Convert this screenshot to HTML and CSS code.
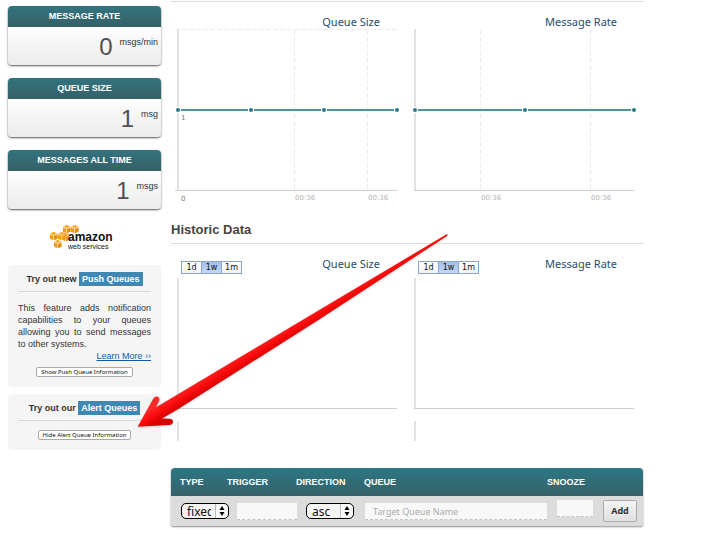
FILE: index.html
```html
<!DOCTYPE html>
<html lang="en">
<head>
<meta charset="utf-8">
<title>Queue dashboard</title>
<link rel="stylesheet" href="styles.css">
</head>
<body>
<div class="page">
  <aside class="sidebar">
    <section class="stat">
      <h2>MESSAGE RATE</h2>
      <p><strong>0</strong><span>msgs/min</span></p>
    </section>
    <section class="stat">
      <h2>QUEUE SIZE</h2>
      <p><strong>1</strong><span>msg</span></p>
    </section>
    <section class="stat">
      <h2>MESSAGES ALL TIME</h2>
      <p><strong>1</strong><span>msgs</span></p>
    </section>

    <svg class="aws" width="64" height="28" viewBox="0 0 64 28" role="img" aria-label="amazon web services">
      <defs>
        <g id="cube">
          <path fill="#f7a428" d="M0 1.500 3.800 0 7.600 1.500 3.800 3z"/>
          <path fill="#f29a1e" d="M0 2.200 3.500 3.600V8.200L0 6.700z"/>
          <path fill="#e88b10" d="M7.600 2.200 4.100 3.600V8.200L7.600 6.700z"/>
          <path fill="none" stroke="#fde3b4" stroke-width=".5" d="M1.600 1V3.600M5.800 1V3.600"/>
        </g>
      </defs>
      <use href="#cube" x="13" y="0"/>
      <use href="#cube" x="21" y="0"/>
      <use href="#cube" x="0" y="7"/>
      <use href="#cube" x="8" y="7"/>
      <use href="#cube" x="4" y="15"/>
      <use href="#cube" x="12" y="8"/>
      <text class="aws-name" x="18" y="16">amazon</text>
      <text class="aws-sub" x="18" y="24">web services</text>
    </svg>

    <section class="promo">
      <h3>Try out new <mark>Push Queues</mark></h3>
      <p>This feature adds notification capabilities to your queues allowing you to send messages to other systems.</p>
      <a href="#push">Learn More ››</a>
      <button type="button">Show Push Queue Information</button>
    </section>
    <section class="promo">
      <h3>Try out our <mark>Alert Queues</mark></h3>
      <button type="button">Hide Alert Queue Information</button>
    </section>
  </aside>

  <main class="main">
    <div class="charts">
      <figure class="chart">
        <figcaption>Queue Size</figcaption>
        <svg viewBox="0 0 236 178">
          <path class="grid" d="M4 1.500H226M123.500 2V165M196.500 2V165"/>
          <path class="axis" d="M7 1V162"/>
          <path class="base" d="M4 162.500H226"/>
          <path class="series" d="M7 82H226"/>
          <g class="dots"><circle cx="7" cy="82" r="3"/><circle cx="80" cy="82" r="3"/><circle cx="153" cy="82" r="3"/><circle cx="226" cy="82" r="3"/></g>
          <text class="value" x="10" y="92">1</text>
          <text class="value" x="10" y="173">0</text>
          <text class="tick" x="124" y="172">00:36</text>
          <text class="tick" x="197" y="172">00:36</text>
        </svg>
      </figure>
      <figure class="chart">
        <figcaption>Message Rate</figcaption>
        <svg viewBox="0 0 236 178">
          <path class="grid" d="M72.500 2V165M182.500 2V165"/>
          <path class="axis" d="M7 1V162"/>
          <path class="base" d="M6 162.500H226"/>
          <path class="series" d="M7 82H226"/>
          <g class="dots"><circle cx="7" cy="82" r="3"/><circle cx="117" cy="82" r="3"/><circle cx="226" cy="82" r="3"/></g>
          <text class="tick" x="73" y="172">00:36</text>
          <text class="tick" x="183" y="172">00:36</text>
        </svg>
      </figure>
    </div>

    <h2 class="heading">Historic Data</h2>
    <div class="charts">
      <figure class="chart">
        <div class="range"><button type="button">1d</button><button type="button" class="on">1w</button><button type="button">1m</button></div>
        <figcaption>Queue Size</figcaption>
        <svg viewBox="0 0 236 171">
          <path class="axis" d="M7 8V139M7 151V171"/>
          <path class="base" d="M6 138.500H226"/>
        </svg>
      </figure>
      <figure class="chart">
        <div class="range"><button type="button">1d</button><button type="button" class="on">1w</button><button type="button">1m</button></div>
        <figcaption>Message Rate</figcaption>
        <svg viewBox="0 0 236 171">
          <path class="axis" d="M7 8V139M7 151V171"/>
          <path class="base" d="M6 138.500H226"/>
        </svg>
      </figure>
    </div>

    <table class="alerts">
      <colgroup><col class="c-type"><col class="c-trigger"><col class="c-direction"><col><col class="c-snooze"><col class="c-add"></colgroup>
      <thead>
        <tr><th>TYPE</th><th>TRIGGER</th><th>DIRECTION</th><th>QUEUE</th><th>SNOOZE</th><th></th></tr>
      </thead>
      <tbody>
        <tr>
          <td><span class="pick"><select aria-label="Type"><option>fixed</option><option>progressive</option></select><svg viewBox="0 0 6 10"><path d="M3 0 5.500 4H.5zM3 10 .5 6H5.500z"/></svg></span></td>
          <td><input type="text" class="trigger" aria-label="Trigger"></td>
          <td><span class="pick"><select aria-label="Direction"><option>asc</option><option>desc</option></select><svg viewBox="0 0 6 10"><path d="M3 0 5.500 4H.5zM3 10 .5 6H5.500z"/></svg></span></td>
          <td class="queue"><input type="text" aria-label="Queue" placeholder="Target Queue Name"></td>
          <td class="raised"><input type="text" class="snooze" aria-label="Snooze"></td>
          <td class="add"><button type="button">Add</button></td>
        </tr>
      </tbody>
    </table>
  </main>

  <svg class="pointer" width="320" height="200" viewBox="132 232 320 200" aria-hidden="true">
    <defs>
      <linearGradient id="red" gradientUnits="userSpaceOnUse" x1="240" y1="353" x2="248" y2="366">
        <stop offset="0" stop-color="#ff2a2a"/><stop offset=".5" stop-color="#fb0d0d"/><stop offset="1" stop-color="#d80000"/>
      </linearGradient>
    </defs>
    <path fill="url(#red)" d="M447 234 320 309.500 156 407.300 159.300 400.500Q160 397 157 396.600 154.500 396 153 399L137.700 426.700 169 425Q173 424.600 173 421.500 172.600 418.800 169.500 418.700L162 418.500 176.700 410 320 319 447 236Q448 235 447 234z"/>
  </svg>
</div>
</body>
</html>
```
FILE: styles.css
```css
* { box-sizing: border-box; }

body {
  margin: 0;
  background: #fff;
  color: #333;
  font-family: "Liberation Sans", Arial, sans-serif;
  font-size: 9px;
  line-height: 12px;
}

h2, h3, p, figure { margin: 0; }

.page {
  position: relative;
  display: grid;
  grid-template-columns: 153px minmax(0, 1fr);
  column-gap: 10px;
  padding: 0 72px 12px 8px;
}

/* Sidebar */
.sidebar {
  display: flex;
  flex-direction: column;
  padding-top: 6px;
}

.stat {
  height: 59px;
  margin-bottom: 13px;
  border-radius: 4px;
  background: linear-gradient(#fff 35%, #ebebeb);
  box-shadow: 0 1px 2px rgba(0, 0, 0, .65);
}

.stat h2 {
  height: 21px;
  border-radius: 4px 4px 0 0;
  background: linear-gradient(#33747f, #365f66);
  color: #fff;
  font-size: 9px;
  line-height: 20px;
  text-align: center;
}

.stat p {
  display: flex;
  justify-content: flex-end;
  gap: 7px;
  padding: 8px 3px 0 0;
}

.stat strong {
  color: #505050;
  font-size: 24px;
  font-weight: 400;
  line-height: 24px;
}

.stat span { line-height: 15px; }

.aws {
  align-self: center;
  margin: 3px 6px 12px 0;
  font-family: "Liberation Sans", Arial, sans-serif;
}

.aws-name { font-size: 12px; font-weight: 700; fill: #111; }
.aws-sub { font-size: 7px; fill: #111; }

.promo {
  display: flex;
  flex-direction: column;
  margin-bottom: 7px;
  padding: 7px 10px 10px;
  border-radius: 4px;
  background: #f5f5f5;
}

.promo h3 {
  padding-bottom: 5px;
  border-bottom: 1px solid #d8d8d8;
  font-size: 9px;
  line-height: 14px;
  text-align: center;
}

.promo mark {
  display: inline-block;
  padding: 0 3px;
  background: #4088b4;
  color: #fff;
}

.promo p {
  margin-top: 10px;
  text-align: justify;
}

.promo a {
  align-self: flex-end;
  color: #0a5ba8;
}

.promo button {
  align-self: center;
  height: 10px;
  margin-top: 5px;
  padding: 0 4px;
  border: 1px solid #aaa;
  border-radius: 2px;
  background: #fff;
  color: #111;
  font: 6px/8px "Noto Sans", sans-serif;
}

.promo h3 + button { margin-top: 9px; }

/* Charts */
.main { padding-top: 1px; }

.charts {
  display: grid;
  grid-template-columns: 1fr 1fr;
  column-gap: 1px;
  padding-top: 12px;
  border-top: 1px solid #dcdcdc;
}

.chart { position: relative; }

.chart figcaption {
  padding-right: 27px;
  color: #274b6d;
  font: 11px/16px "Noto Sans", sans-serif;
  text-align: right;
}

.chart svg {
  display: block;
  width: 100%;
  margin-top: -2px;
  overflow: visible;
}

.grid { fill: none; stroke: #ececec; stroke-dasharray: 5 2; }
.axis { fill: none; stroke: #e2e2e2; stroke-width: 2; }
.base { fill: none; stroke: #cfcfcf; }
.series { fill: none; stroke: #4d949e; stroke-width: 2; }
.dots { fill: #2a7885; stroke: #fff; stroke-width: 2; paint-order: stroke; }
.dots circle { r: 2px; }
.value, .tick { font: 7px "DejaVu Sans", sans-serif; }
.value { fill: #777; }
.tick { fill: #b5b5b5; }

.heading {
  margin-top: 16px;
  padding-bottom: 5px;
  color: #444;
  font-size: 13px;
  line-height: 16px;
}

.range {
  position: absolute;
  top: 5px;
  left: 10px;
  display: flex;
}

.range button {
  width: 21px;
  height: 13px;
  margin-right: -1px;
  padding: 0;
  border: 1px solid #8ba6c4;
  background: linear-gradient(#fff, #f3f3f3);
  color: #111;
  font: 8px/11px "DejaVu Sans", sans-serif;
}

.range .on { background: linear-gradient(#a3bfea, #c5d8f8); }

/* Alert table */
.alerts {
  width: calc(100% - 1px);
  margin-top: 27px;
  table-layout: fixed;
  border-collapse: separate;
  border-spacing: 0;
  border-radius: 4px 4px 2px 2px;
  background: #dcdcdc;
  box-shadow: 0 1px 2px rgba(0, 0, 0, .45);
}

.c-type { width: 56px; }
.c-trigger { width: 69px; }
.c-direction { width: 68px; }
.c-snooze { width: 56px; }
.c-add { width: 40px; }

.alerts thead tr { background: linear-gradient(#2c7783, #36616a); }

.alerts th {
  height: 28px;
  padding: 0;
  color: #fff;
  font-size: 9px;
  text-align: left;
}

.alerts th:first-child { padding-left: 9px; }
.alerts thead { clip-path: inset(0 round 4px 4px 0 0); }

.alerts td {
  height: 30px;
  padding: 7px 0 0 10px;
  vertical-align: top;
}

.alerts .queue { padding-left: 1px; }
.alerts .raised { padding-top: 4px; }
.alerts .add { padding: 4px 0 0 0; }

.alerts input {
  display: block;
  width: 100%;
  height: 17px;
  padding: 0 8px;
  border: 0;
  border-bottom: 1px dashed #c4c4c4;
  border-radius: 0;
  background: #f8f8f8;
  font: 9px/16px "Noto Sans", sans-serif;
}

.alerts input::placeholder { color: #aaa; }
.alerts .trigger { width: 60px; }
.alerts .snooze { width: 36px; }

.alerts .add button {
  width: 34px;
  height: 22px;
  padding: 0;
  border: 1px solid #aaa;
  border-radius: 2px;
  background: linear-gradient(#f5f5f5, #e0e0e0);
  color: #333;
  font: 700 9px/20px "Noto Sans", sans-serif;
}

.pick {
  position: relative;
  display: block;
  width: 48px;
}

.pick select {
  display: block;
  width: 100%;
  height: 16px;
  padding: 0 17px 0 5px;
  border: 1px solid #000;
  border-radius: 5px;
  background: linear-gradient(90deg, #f4f4f4 33px, #bbb 33px, #bbb 34px, #f8f8f8 34px);
  color: #111;
  font: 12px/13px "Noto Sans", sans-serif;
  appearance: none;
}

.pick svg {
  position: absolute;
  top: 3px;
  right: 4px;
  width: 6px;
  height: 10px;
  pointer-events: none;
}

/* Annotation laid over the page */
.pointer {
  position: absolute;
  top: 232px;
  left: 132px;
  filter: drop-shadow(0 1px 1px rgba(0, 0, 0, .15));
  pointer-events: none;
}
```
